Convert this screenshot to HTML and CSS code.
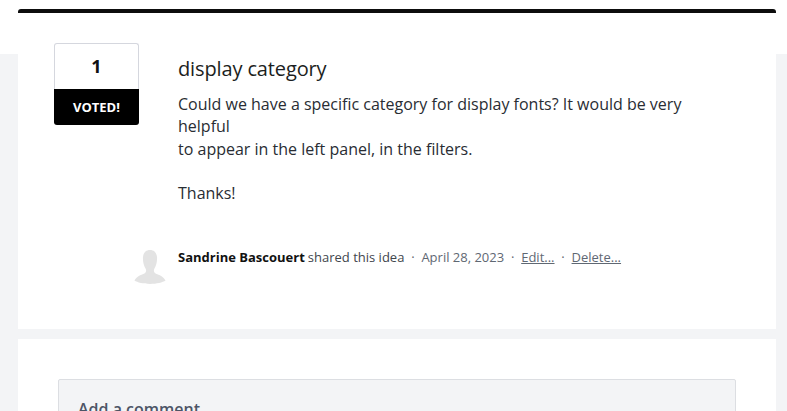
FILE: index.html
```html
<!doctype html>
<html lang="en">
<head>
  <meta charset="UTF-8">
  <title>display category</title>
  <link rel="stylesheet" href="styles.css">
</head>
<body>
  <div class="page">
    <div class="idea-card">
      <div class="vote-box">
        <div class="vote-count">1</div>
        <div class="vote-label">VOTED!</div>
      </div>
      <div class="idea-body">
        <h1 class="idea-title">display category</h1>
        <p class="idea-text">Could we have a specific category for display fonts? It would be very helpful<br>to appear in the left panel, in the filters.</p>
        <p class="idea-text idea-thanks">Thanks!</p>
        <div class="idea-meta">
          <svg class="avatar" width="32" height="35" viewBox="0 0 34 36" preserveAspectRatio="none">
            <path fill="#e3e3e3" d="M17 1c-4.500 0-7.500 3-7.500 8.500 0 4 1 8 3 11 1 2 0 4-2 5-3 1-8 3-10 7 3 2 9.500 3.500 16.500 3.500s13.500-1.500 16.500-3.500c-2-4-7-6-10-7-2-1-3-3-2-5 2-3 3-7 3-11 0-5.500-3-8.500-7.500-8.500z"/>
          </svg>
          <span class="author">Sandrine Bascouert</span>
          <span class="shared">shared this idea</span>
          <span class="dot">·</span>
          <span>April 28, 2023</span>
          <span class="dot">·</span>
          <a href="#">Edit...</a>
          <span class="dot">·</span>
          <a href="#">Delete...</a>
        </div>
      </div>
    </div>
    <div class="comment-card">
      <div class="comment-box">
        <h2 class="comment-title">Add a comment</h2>
      </div>
    </div>
  </div>
</body>
</html>
```

FILE: styles.css
```css
* {
  margin: 0;
  padding: 0;
  box-sizing: border-box;
}
html,
body {
  height: 411px;
  overflow: hidden;
}
body {
  background: linear-gradient(#fff 54px, #f3f4f6 54px);
  font-family: "Open Sans", "Noto Sans", sans-serif;
  color: #292d33;
}
.page {
  padding: 9px 11px 0 18px;
}
.idea-card {
  display: flex;
  height: 320px;
  padding: 30px 36px 0;
  background-color: #fff;
  border-top: 4px solid #0d0d0d;
  border-radius: 3px 3px 0 0;
}
.vote-box {
  flex: none;
  width: 85px;
  height: 82px;
}
.vote-count {
  height: 46px;
  line-height: 45px;
  text-align: center;
  font-size: 18px;
  font-weight: 700;
  color: #111;
  border: 1px solid #d5d7de;
  border-bottom: 0;
  border-radius: 3px 3px 0 0;
}
.vote-label {
  height: 36px;
  line-height: 36px;
  text-align: center;
  font-size: 13px;
  font-weight: 700;
  color: #fff;
  background-color: #000;
  border-radius: 0 0 3px 3px;
}
.idea-body {
  width: 530px;
  margin-left: 39px;
}
.idea-title {
  margin-top: 12px;
  font-size: 20px;
  font-weight: 400;
  line-height: 28px;
  letter-spacing: -0.13px;
  color: #1c1e21;
}
.idea-text {
  margin-top: 10px;
  font-size: 16px;
  line-height: 22.4px;
}
.idea-thanks {
  margin-top: 22px;
}
.idea-meta {
  display: flex;
  align-items: flex-start;
  gap: 5px;
  margin: 43px 0 0 -44px;
  font-size: 13px;
  line-height: 18px;
  color: #5f6873;
}
.avatar {
  flex: none;
  margin: 1px 7px 0 0;
}
.author {
  margin-right: -2px;
  font-weight: 700;
  color: #111;
}
.shared {
  color: #41464d;
}
.dot {
  margin: 0 1.8px;
}
.idea-meta a {
  color: #5f6873;
}
.comment-card {
  height: 72px;
  margin-top: 10px;
  padding: 40px 40px 0;
  background-color: #fff;
  overflow: hidden;
}
.comment-box {
  height: 100px;
  padding: 18px 19px;
  background-color: #f3f4f6;
  border: 1px solid #dcdee2;
  border-radius: 2px;
}
.comment-title {
  font-size: 16px;
  font-weight: 600;
  line-height: 22px;
  color: #4d5566;
}
```
